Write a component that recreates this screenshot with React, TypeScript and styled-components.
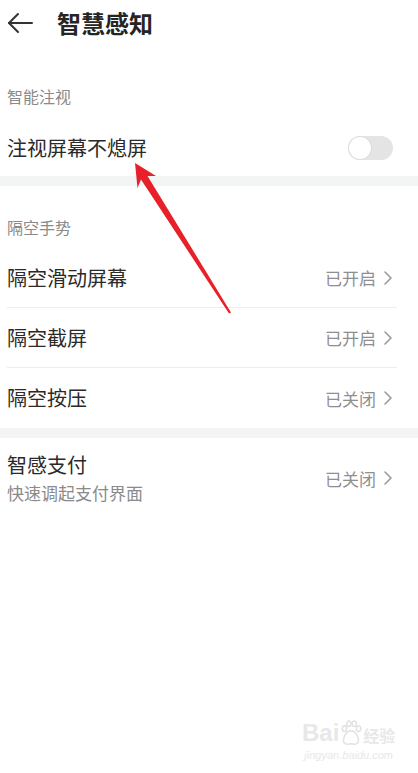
import React, { FC } from "react";
import styled, { createGlobalStyle } from "styled-components";

const GlobalStyle = createGlobalStyle`
  html, body { margin: 0; padding: 0; background: #ffffff; }
  body { font-family: "Noto Sans CJK SC", "Noto Sans", sans-serif; }
`;

const Page = styled.div`
  position: relative;
  width: 418px;
  min-height: 773px;
  background: #ffffff;
  overflow: hidden;
`;

const Header = styled.header`
  height: 46px;
  display: flex;
  align-items: center;
  padding-left: 7px;
  gap: 24px;
`;

const Title = styled.h1`
  margin: 0;
  font-size: 24px;
  font-weight: 700;
  color: #252525;
  line-height: 28px;
`;

const SectionLabel = styled.div<{ $top: number; $bottom: number }>`
  padding: ${(p) => p.$top}px 21px ${(p) => p.$bottom}px 7px;
  font-size: 16px;
  line-height: 20px;
  color: #8a8a8a;
`;

const Row = styled.div<{ $h: number; $divider?: boolean }>`
  height: ${(p) => p.$h}px;
  margin: 0 21px 0 7px;
  display: flex;
  align-items: center;
  justify-content: space-between;
  box-sizing: border-box;
  border-bottom: ${(p) => (p.$divider ? "1px solid #ededed" : "none")};
`;

const RowText = styled.div`
  display: flex;
  flex-direction: column;
  gap: 4px;
`;

const RowTitle = styled.span`
  font-size: 20px;
  line-height: 26px;
  color: #2a2a2a;
`;

const RowSub = styled.span`
  font-size: 17px;
  line-height: 22px;
  color: #8a8a8a;
`;

const Value = styled.span`
  display: flex;
  align-items: center;
  gap: 7px;
  font-size: 17px;
  color: #8f8f8f;
  margin-right: 4px;
`;

const Band = styled.div`
  height: 10px;
  background: #f3f4f4;
`;

const Toggle = styled.div`
  width: 45px;
  height: 24px;
  border-radius: 12px;
  background: #e4e4e4;
  display: flex;
  align-items: center;
  padding: 1px;
  box-sizing: border-box;
  margin-right: 4px;
`;

const Knob = styled.div`
  width: 22px;
  height: 22px;
  border-radius: 50%;
  background: #fff;
  box-shadow: 0 0 0 1px #dcdcdc;
`;

const Overlay = styled.svg`
  position: absolute;
  left: 0;
  top: 0;
  pointer-events: none;
`;

const Watermark = styled.div`
  position: absolute;
  left: 302px;
  top: 720px;
  display: flex;
  flex-direction: column;
  align-items: center;
  color: #e8e8e8;
  font-family: "Liberation Sans", sans-serif;
`;

const WmTop = styled.div`
  display: flex;
  align-items: flex-end;
  font-size: 24px;
  font-weight: 700;
  line-height: 26px;
`;

const WmCjk = styled.span`
  font-family: "Noto Sans CJK SC", sans-serif;
  font-size: 16px;
  line-height: 22px;
`;

const WmUrl = styled.div`
  font-size: 11px;
  line-height: 14px;
  font-style: italic;
  margin-top: 2px;
`;

const BackArrow = () => (
  <svg width="26" height="22" viewBox="0 0 26 22" fill="none" stroke="#333" strokeWidth="2" strokeLinecap="round" strokeLinejoin="round">
    <path d="M25 11H2" />
    <path d="M11 2L2 11L11 20" />
  </svg>
);

const Chevron = () => (
  <svg width="10" height="16" viewBox="0 0 10 16" fill="none" stroke="#9a9a9a" strokeWidth="1.6" strokeLinecap="round" strokeLinejoin="round">
    <path d="M2 2L8 8L2 14" />
  </svg>
);

const Paw = () => (
  <svg width="24" height="26" viewBox="0 0 22 24" fill="none" stroke="#e2e2e2" strokeWidth="1.4">
    <ellipse cx="5" cy="8" rx="2" ry="2.6" />
    <ellipse cx="9" cy="3.5" rx="2" ry="2.6" />
    <ellipse cx="14" cy="3.5" rx="2" ry="2.6" />
    <ellipse cx="18" cy="8" rx="2" ry="2.6" />
    <path d="M11 10C7 10 4 15 4 19C4 22 7 23 11 22C15 23 18 22 18 19C18 15 15 10 11 10Z" />
  </svg>
);

const App: FC = () => (
  <Page>
    <GlobalStyle />
    <Header>
      <BackArrow />
      <Title>智慧感知</Title>
    </Header>

    <SectionLabel $top={40} $bottom={14}>智能注视</SectionLabel>
    <Row $h={56}>
      <RowTitle>注视屏幕不熄屏</RowTitle>
      <Toggle>
        <Knob />
      </Toggle>
    </Row>
    <Band />

    <SectionLabel $top={31} $bottom={11}>隔空手势</SectionLabel>
    <Row $h={60} $divider>
      <RowTitle>隔空滑动屏幕</RowTitle>
      <Value>已开启<Chevron /></Value>
    </Row>
    <Row $h={60} $divider>
      <RowTitle>隔空截屏</RowTitle>
      <Value>已开启<Chevron /></Value>
    </Row>
    <Row $h={60}>
      <RowTitle>隔空按压</RowTitle>
      <Value>已关闭<Chevron /></Value>
    </Row>
    <Band />

    <Row $h={80}>
      <RowText>
        <RowTitle>智感支付</RowTitle>
        <RowSub>快速调起支付界面</RowSub>
      </RowText>
      <Value>已关闭<Chevron /></Value>
    </Row>

    <Overlay width="418" height="773" viewBox="0 0 418 773">
      <polygon
        points="135,163 156,176 147.5,176 231,312.5 229,313.5 141,179.5 137.5,188"
        fill="#e8202a"
      />
    </Overlay>

    <Watermark>
      <WmTop>
        Bai<Paw /><WmCjk>经验</WmCjk>
      </WmTop>
      <WmUrl>jingyan.baidu.com</WmUrl>
    </Watermark>
  </Page>
);

export default App;
